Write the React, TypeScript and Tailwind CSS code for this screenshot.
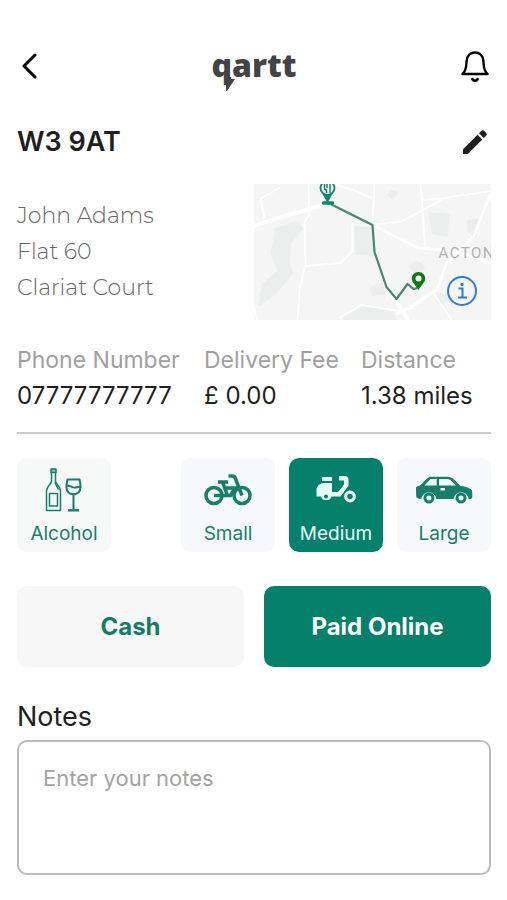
import { useState, type ReactNode } from "react";

type TileProps = {
  label: string;
  icon: ReactNode;
  active?: boolean;
  tone?: string;
  onClick: () => void;
};

const customer = {
  postcode: "W3 9AT",
  address: ["John Adams", "Flat 60", "Clariat Court"],
};

const details = [
  { label: "Phone Number", value: "07777777777" },
  { label: "Delivery Fee", value: "£ 0.00" },
  { label: "Distance", value: "1.38 miles" },
];

function Logo() {
  return (
    <div className="relative pb-0.5 font-['Open_Sans',sans-serif] text-[32px] leading-9 font-extrabold text-[#434345]">
      qartt
      <svg viewBox="0 0 10 14" className="absolute top-[30px] left-3.5 h-[14px] w-[10px]" fill="currentColor" aria-hidden="true">
        <path d="M0 0h5v2h4L1 14H0z" />
      </svg>
    </div>
  );
}

function BellIcon() {
  return (
    <svg viewBox="0 0 28 32" className="h-8 w-7" fill="none" stroke="currentColor" strokeWidth="2.400" strokeLinecap="round" strokeLinejoin="round">
      <path d="M1.500 24h25c-2.600-2.200-3.300-4.500-3.700-8.500l-.5-5C21.800 5.500 18.500 2.500 14 2.500S6.200 5.500 5.700 10.500l-.5 5c-.4 4-1.100 6.300-3.700 8.500z" />
      <path d="M11.500 29.200c1.300 2 3.700 2 5 0" strokeWidth="2.800" />
    </svg>
  );
}

function PencilIcon() {
  return (
    <svg viewBox="0 0 26 26" className="h-[26px] w-[26px]" fill="currentColor">
      <path d="M1 20.200 15.500 5.700l4.800 4.800L5.800 25H1z" />
      <path d="m17 4.200 2.400-2.400c.8-.8 1.900-.8 2.700 0l2.100 2.100c.8.8.8 1.900 0 2.700L21.800 9z" />
    </svg>
  );
}

function AlcoholIcon() {
  return (
    <svg viewBox="0 0 38 44" className="h-11 w-[38px]" fill="none" stroke="currentColor" strokeWidth="1.500" strokeLinejoin="round">
      <path d="M6 1h5v3.500H6z" fill="currentColor" fillOpacity=".5" />
      <path d="M6.500 4.500v9C5.800 17 1.500 18.500 1.500 23v19.500h14V23c0-4.500-4.300-6-5-9.500v-9" />
      <path d="M4.500 25.500h8v12.500h-8zM10 14c.4 3 2.700 4.500 3.200 7.500" />
      <path d="M22.500 11.500h12c.8 3.200 1.200 5.700 1 8-.3 4.300-3 6.700-7 6.700s-6.700-2.400-7-6.700c-.2-2.300.2-4.800 1-8z" strokeWidth="2" />
      <path d="M21.500 18c3.500-1.500 5 1.500 8 1.500 2.500 0 4-1 6-1M28.500 26v15" strokeWidth="2" />
      <path d="M23 42.300h11" strokeWidth="2.400" />
    </svg>
  );
}

function BikeIcon() {
  return (
    <svg viewBox="0 0 48 34" className="h-[34px] w-12" fill="none" stroke="currentColor" strokeWidth="3.500">
      <circle cx="10" cy="22.500" r="8" />
      <circle cx="38" cy="22.500" r="8" />
      <path d="M10 22.500h13M14 9h10M18.500 9l5 13.500h3L31 15H21M24.500 3H29c1 0 1.600.5 2 1.500L38 22.500" />
    </svg>
  );
}

function MopedIcon() {
  return (
    <svg viewBox="0 0 40 28" className="h-7 w-10" fill="currentColor">
      <path d="M6 1h10v4H6z" />
      <path d="M8 7h8v9h6l6-7.500V4.500h-5V0h6c2 0 3.500 1.500 3.500 3.500v6.300L24.500 20.500h-9a5.500 5.500 0 0 1-10.500 0H.5V14C.5 10 4 7 8 7z" />
      <circle cx="10" cy="20.500" r="2" className="fill-[#04806b]" />
      <circle cx="34" cy="20.500" r="4.300" fill="none" stroke="currentColor" strokeWidth="3.200" />
    </svg>
  );
}

function CarIcon() {
  return (
    <svg viewBox="0 0 58 28" className="h-7 w-[58px]" fill="currentColor">
      <path
        fillRule="evenodd"
        d="M16 .8h16c3 0 5 .8 7 2.600L45.500 10c5 .6 10 2 11.300 4.500.7 1.500.7 6.500.2 7.500-.4.800-1.500 1-3.200 1a7.700 7.700 0 0 0-15.300 0H21.500a7.700 7.700 0 0 0-15.300 0C3.500 22.800 1.500 22 1.200 20.500L1 12c0-2 2.500-1.500 4.500-3L12 2.500C13.200 1.300 14.500.8 16 .8zM15.500 3 9.500 9.500h12.200V3zM24 3v6.500h17L36.500 5C35 3.500 33.500 3 31.500 3zM25.500 12v2.500h4.500V12z"
      />
      <circle cx="13.900" cy="22" r="4" fill="none" stroke="currentColor" strokeWidth="3" />
      <circle cx="46" cy="22" r="4" fill="none" stroke="currentColor" strokeWidth="3" />
    </svg>
  );
}

function DeliveryMap() {
  return (
    <div className="relative h-[136px] overflow-hidden bg-[#f5f5f5]">
      <svg viewBox="0 0 238 136" preserveAspectRatio="xMidYMid slice" className="h-full w-full" fill="none">
        <g fill="#eceeee">
          <path d="M22 44l22-7 6 8-12 14-2 20 4 10-18 22-17 11 3-22 16-13-7-18z" />
          <path d="M101 42l18 1 3 29-20-1zM175 28l21 2-2 23-16-3zM214 36l12-2-3 20-9-6z" />
          <path d="M90 134c8-14 27-16 46-8l8 10H90zM116 103l13-5 3 13-14 1zM155 82l8-6 9 7-8 8zM184 108l12 4-5 9-8-3zM138 6l7 3-6 7-5-5z" />
        </g>
        <g stroke="#ffffff" strokeWidth="2">
          <path d="M0 42l28-9 45-13" strokeWidth="4" />
          <path d="M119 41l46 23 35 3 38 12" strokeWidth="3" />
          <path d="M238 9l-7 15-10 27-28 28-9 26-28 19-14 6" strokeWidth="3" />
          <path d="M133 104l22 32" strokeWidth="4" />
          <path d="M11 34L7 15l20-12M55 0l1 30-5 8 1 42-6 26-2 30M121 0l-2 41 30-4 34-18 7-5 48-7M167 0l5 66M99 39v28l-12 12-35 3M86 134l22-13 37 6 15-3M180 109l18 27M0 122l4 14M80 0l20 6 18 8M169 16l24-2" />
        </g>
        <text x="185" y="74" fill="#b0b2b2" className="font-['Roboto',sans-serif] text-[15px] tracking-widest">ACTON</text>
        <path d="M75 19l44 22 2 27 12 35 10 12 11-15 6 5 4-1" stroke="#4b8575" strokeWidth="2.200" strokeLinejoin="round" />
        <g stroke="#15846f">
          <circle cx="74" cy="4" r="7" fill="#f5f5f5" strokeWidth="1.800" />
          <path d="M71-1v5c0 1 1 2 2 2v3M73.500-1v5M76.500 9V0" strokeWidth="1.500" />
          <path d="M69 10l5 9 5-9z" fill="#15846f" strokeWidth="0" />
          <path d="M70 19h9" strokeWidth="3.500" strokeLinecap="round" />
        </g>
        <path d="M165 88c-4 0-6.700 3-6.700 6.500 0 4 4 6.500 6.700 11.500 2.700-5 6.700-7.500 6.700-11.500 0-3.500-2.700-6.500-6.700-6.500z" fill="#087d0d" />
        <circle cx="165" cy="94.500" r="3" fill="#ffffff" />
      </svg>
      <button type="button" aria-label="Map information" className="absolute right-3.5 bottom-3.5 text-[#2c7ddb]">
        <svg viewBox="0 0 30 30" className="h-[30px] w-[30px]" fill="none" stroke="currentColor" strokeWidth="2">
          <circle cx="15" cy="15" r="14" />
          <path d="M11.500 12.500h4v9M11 21.500h9" />
          <circle cx="15" cy="8.500" r="1.700" fill="currentColor" stroke="none" />
        </svg>
      </button>
    </div>
  );
}

function Tile({ label, icon, active = false, tone = "bg-[#f6f8fb]", onClick }: TileProps) {
  return (
    <button
      type="button"
      aria-pressed={active}
      onClick={onClick}
      className={`flex h-[94px] w-[94px] flex-col items-center justify-between rounded-[10px] pt-2.5 pb-1.5 text-[19px] leading-6 ${
        active ? "bg-[#04806b] text-[#e9fbf7]" : `${tone} text-[#167f69]`
      }`}
    >
      <span className="flex h-11 items-center">{icon}</span>
      {label}
    </button>
  );
}

export default function App() {
  const [size, setSize] = useState("Medium");
  const [alcohol, setAlcohol] = useState(false);
  const [payment, setPayment] = useState("Paid Online");
  const [notes, setNotes] = useState("");

  const sizes = [
    { label: "Small", icon: <BikeIcon /> },
    { label: "Medium", icon: <MopedIcon /> },
    { label: "Large", icon: <CarIcon /> },
  ];

  return (
    <div className="min-h-screen bg-white pt-[46px] pr-4 pb-6 pl-[17px] font-['Inter',sans-serif] text-[#1f1f21]">
      <header className="flex h-10 items-center justify-between text-black">
        <button type="button" aria-label="Back" className="flex w-8 pl-1">
          <svg viewBox="0 0 16 26" className="h-[26px] w-4" fill="none" stroke="currentColor" strokeWidth="3" strokeLinecap="round" strokeLinejoin="round">
            <path d="M14 2 3 13l11 11" />
          </svg>
        </button>
        <Logo />
        <button type="button" aria-label="Notifications" className="flex w-8 justify-center">
          <BellIcon />
        </button>
      </header>

      <div className="mt-9 flex h-10 items-center justify-between">
        <h1 className="text-[27px] leading-8 font-semibold">{customer.postcode}</h1>
        <button type="button" aria-label="Edit address" className="flex w-8 justify-center">
          <PencilIcon />
        </button>
      </div>

      <section className="mt-[22px] grid grid-cols-2">
        <address className="pt-3.5 font-['Montserrat','Inter',sans-serif] text-[22px] leading-9 font-light text-[#666666] not-italic">
          {customer.address.map((line) => (
            <p key={line}>{line}</p>
          ))}
        </address>
        <DeliveryMap />
      </section>

      <dl className="mt-[22px] grid grid-cols-[187fr_157fr_130fr] leading-9 whitespace-nowrap">
        {details.map((item) => (
          <div key={item.label}>
            <dt className="text-[23px] text-[#a0a0a0]">{item.label}</dt>
            <dd className="text-[24px]">{item.value}</dd>
          </div>
        ))}
      </dl>

      <hr className="mt-[18px] border-t-2 border-[#cbcbcb]" />

      <div className="mt-6 flex justify-between">
        <Tile label="Alcohol" icon={<AlcoholIcon />} active={alcohol} tone="bg-[#f7f8f8]" onClick={() => setAlcohol(!alcohol)} />
        <div className="flex gap-3.5">
          {sizes.map((item) => (
            <Tile key={item.label} label={item.label} icon={item.icon} active={size === item.label} onClick={() => setSize(item.label)} />
          ))}
        </div>
      </div>

      <div className="mt-[34px] grid grid-cols-2 gap-5">
        {["Cash", "Paid Online"].map((option) => (
          <button
            key={option}
            type="button"
            aria-pressed={payment === option}
            onClick={() => setPayment(option)}
            className={`h-[81px] rounded-[10px] text-[24px] font-bold ${
              payment === option ? "bg-[#04806b] text-white" : "bg-[#f7f7f7] text-[#147d67]"
            }`}
          >
            {option}
          </button>
        ))}
      </div>

      <label htmlFor="notes" className="mt-[34px] block text-[27px] leading-8">
        Notes
      </label>
      <textarea
        id="notes"
        value={notes}
        onChange={(event) => setNotes(event.target.value)}
        placeholder="Enter your notes"
        className="mt-[7px] block h-[135px] w-full resize-none rounded-[10px] border-2 border-[#bcbcbc] px-6 py-5 text-[22px] leading-8 placeholder:text-[#a3a3a3]"
      />
    </div>
  );
}
